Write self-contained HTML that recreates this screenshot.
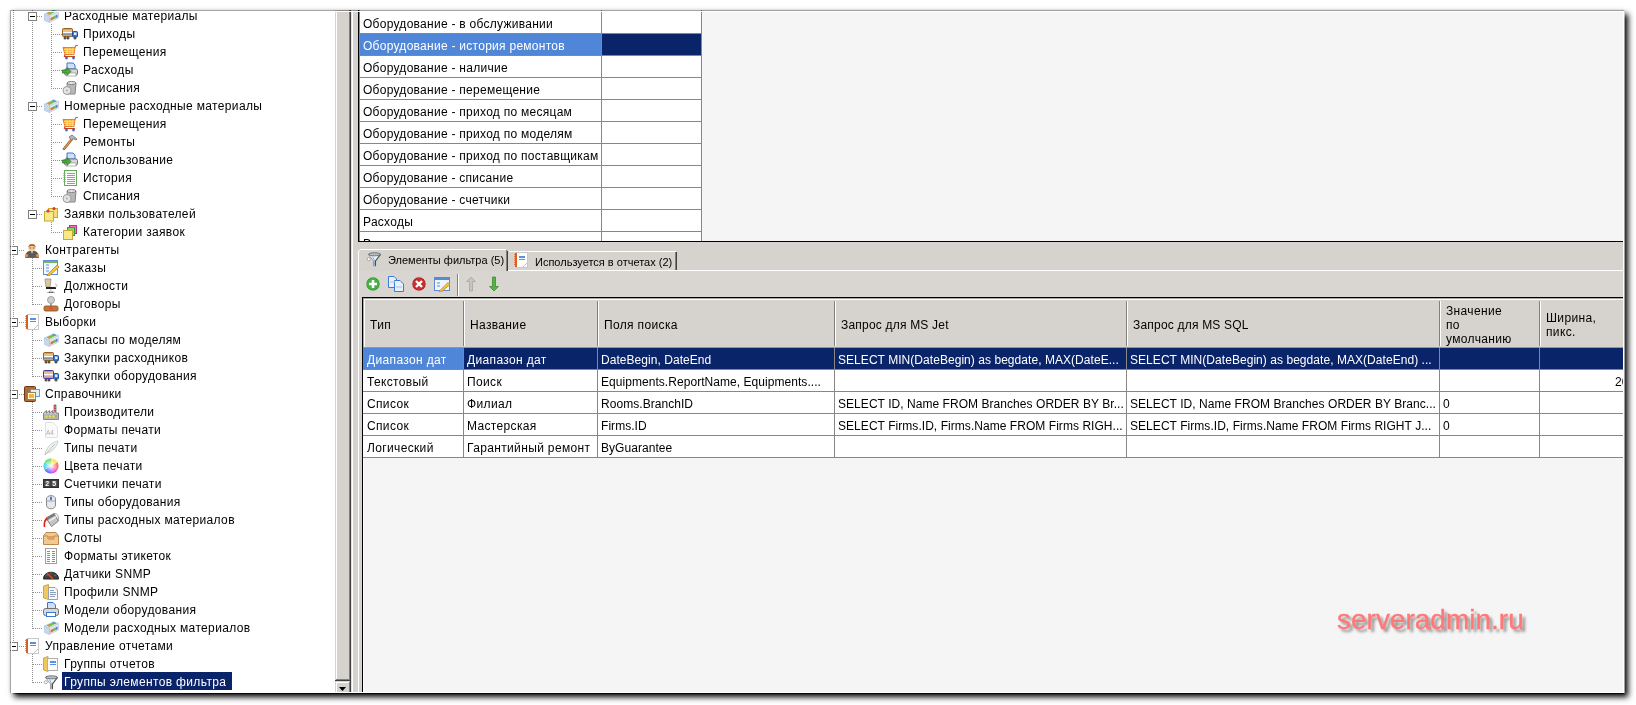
<!DOCTYPE html>
<html><head><meta charset="utf-8"><style>
html,body{margin:0;padding:0;}
body{width:1636px;height:705px;overflow:hidden;background:#fff;position:relative;font-family:"Liberation Sans", sans-serif;}
#shadow{position:absolute;left:10px;top:10px;width:1614px;height:683px;box-shadow:4px 4px 6px 0 rgba(0,0,0,1), 0 0 3px rgba(0,0,0,0.10);background:#fff;}
#clip{position:absolute;left:10px;top:10px;width:1613px;height:682px;overflow:hidden;}
#inner{position:absolute;left:-10px;top:-10px;width:1636px;height:705px;will-change:transform;}
.ov{position:absolute;}
#inner div{position:absolute;}
.t{line-height:16px;white-space:nowrap;}
#wm{position:absolute;left:1337px;top:600px;font:28px/40px "Liberation Sans", sans-serif;color:#ff7878;-webkit-text-stroke:0.4px #ff7878;text-shadow:3px 3px 3px rgba(0,0,0,0.45);white-space:nowrap;}
</style></head><body>
<div id="shadow"></div>
<div id="clip"><div id="inner">
<div style="left:0px;top:0px;width:335px;height:705px;background:#fff;"></div>
<div style="left:13px;top:10px;width:1px;height:637px;background:repeating-linear-gradient(to bottom,#909090 0,#909090 1px,transparent 1px,transparent 2px)"></div>
<div style="left:32px;top:10px;width:1px;height:205px;background:repeating-linear-gradient(to bottom,#909090 0,#909090 1px,transparent 1px,transparent 2px)"></div>
<div style="left:32px;top:258px;width:1px;height:47px;background:repeating-linear-gradient(to bottom,#909090 0,#909090 1px,transparent 1px,transparent 2px)"></div>
<div style="left:32px;top:330px;width:1px;height:47px;background:repeating-linear-gradient(to bottom,#909090 0,#909090 1px,transparent 1px,transparent 2px)"></div>
<div style="left:32px;top:402px;width:1px;height:227px;background:repeating-linear-gradient(to bottom,#909090 0,#909090 1px,transparent 1px,transparent 2px)"></div>
<div style="left:32px;top:654px;width:1px;height:29px;background:repeating-linear-gradient(to bottom,#909090 0,#909090 1px,transparent 1px,transparent 2px)"></div>
<div style="left:51px;top:24px;width:1px;height:65px;background:repeating-linear-gradient(to bottom,#909090 0,#909090 1px,transparent 1px,transparent 2px)"></div>
<div style="left:51px;top:114px;width:1px;height:83px;background:repeating-linear-gradient(to bottom,#909090 0,#909090 1px,transparent 1px,transparent 2px)"></div>
<div style="left:51px;top:222px;width:1px;height:11px;background:repeating-linear-gradient(to bottom,#909090 0,#909090 1px,transparent 1px,transparent 2px)"></div>
<div style="left:33px;top:16px;width:10px;height:1px;background:repeating-linear-gradient(to right,#909090 0,#909090 1px,transparent 1px,transparent 2px)"></div>
<div style="left:28px;top:12px;width:7px;height:7px;border:1px solid #808080;background:#fff"></div>
<div style="left:30px;top:16px;width:5px;height:1px;background:#000;"></div>
<svg style="position:absolute;left:43px;top:8px" width="16" height="16" viewBox="0 0 16 16"><path d="M1.5 6 L10.5 1.5 L15.5 3.5 L6.5 8 Z" fill="#eef4fb" stroke="#b8cce0" stroke-width="0.7"/>
<path d="M3.5 5.5 L10.5 2 L13.5 3.3 L6.5 6.8 Z" fill="#70c050"/>
<path d="M3.5 5.5 L6 4.2 L9 5.5 L6.5 6.8 Z" fill="#f08a30"/>
<path d="M9 2.8 L10.5 2 L13.5 3.3 L12 4.1 Z" fill="#4a90e2"/>
<path d="M6.5 8 L15.5 3.5 L15.5 10 L6.5 14.5 Z" fill="#dde8f4" stroke="#b8cce0" stroke-width="0.7"/>
<path d="M7.5 10 L10 8.8 V11.5 L7.5 12.7 Z" fill="#f07030"/><path d="M10 8.8 L12.5 7.5 V10.2 L10 11.5 Z" fill="#60c050"/><path d="M12.5 7.5 L14.5 6.5 V9.2 L12.5 10.2 Z" fill="#6a70e0"/>
<path d="M1.5 6 L6.5 8 L6.5 14.5 L1.5 12.5 Z" fill="#c8d8ec" stroke="#b0c4dc" stroke-width="0.7"/></svg>
<div class="t" style="left:64px;top:8px;color:#000;font-size:12px;letter-spacing:0.35px;">Расходные материалы</div>
<div style="left:53px;top:34px;width:9px;height:1px;background:repeating-linear-gradient(to right,#909090 0,#909090 1px,transparent 1px,transparent 2px)"></div>
<svg style="position:absolute;left:62px;top:26px" width="16" height="16" viewBox="0 0 16 16"><rect x="0.5" y="2.5" width="10" height="8" rx="1" fill="#d8a268" stroke="#9a6020"/>
<rect x="1" y="4.5" width="9" height="1" fill="#f4e0b0"/><rect x="1" y="6" width="9" height="1.5" fill="#fff"/><rect x="1" y="7.5" width="9" height="1" fill="#4a80d0"/>
<rect x="10.5" y="5.5" width="5" height="5.5" rx="1" fill="#3f7fd8" stroke="#1f4f98"/><rect x="12" y="6.5" width="2.5" height="2.5" fill="#e0ecff"/>
<circle cx="3" cy="12" r="1.5" fill="#505050"/><circle cx="6" cy="12" r="1.5" fill="#505050"/><circle cx="13" cy="12" r="1.5" fill="#505050"/></svg>
<div class="t" style="left:83px;top:26px;color:#000;font-size:12px;letter-spacing:0.35px;">Приходы</div>
<div style="left:53px;top:52px;width:9px;height:1px;background:repeating-linear-gradient(to right,#909090 0,#909090 1px,transparent 1px,transparent 2px)"></div>
<svg style="position:absolute;left:62px;top:44px" width="16" height="16" viewBox="0 0 16 16"><path d="M1 3.5 H13 L12 10.5 H3 Z" fill="#f9b43a" stroke="#e06a10" stroke-width="0.9"/>
<path d="M2 5.5 H12.7 M2.4 7.5 H12.4 M2.8 9.5 H12.1 M5 3.5 L5.5 10.5 M8 3.5 V10.5 M11 3.5 L10.5 10.5" stroke="#fde2a0" stroke-width="0.7"/>
<path d="M13 3.5 L14 1.5 H16" stroke="#e06a10" stroke-width="1.2" fill="none"/>
<path d="M3 10.5 L2.5 12.5 H13" stroke="#d84010" stroke-width="1.2" fill="none"/>
<circle cx="4.5" cy="14" r="1.4" fill="#3a6ad0"/><circle cx="11.5" cy="14" r="1.4" fill="#3a6ad0"/></svg>
<div class="t" style="left:83px;top:44px;color:#000;font-size:12px;letter-spacing:0.35px;">Перемещения</div>
<div style="left:53px;top:70px;width:9px;height:1px;background:repeating-linear-gradient(to right,#909090 0,#909090 1px,transparent 1px,transparent 2px)"></div>
<svg style="position:absolute;left:62px;top:62px" width="16" height="16" viewBox="0 0 16 16"><path d="M5 1 H11 L13 3 V7 H5 Z" fill="#cfe0f8" stroke="#3a78d0"/>
<rect x="2.5" y="7" width="13" height="6" rx="1.5" fill="#d8d8d8" stroke="#707070"/>
<rect x="4" y="11" width="10" height="3" fill="#fff" stroke="#888" stroke-width="0.6"/>
<path d="M0.5 8 H5 V5.5 L9 9.5 L5 13.5 V11 H0.5 Z" fill="#4caa3c" stroke="#2a7a20" stroke-width="0.8"/></svg>
<div class="t" style="left:83px;top:62px;color:#000;font-size:12px;letter-spacing:0.35px;">Расходы</div>
<div style="left:53px;top:88px;width:9px;height:1px;background:repeating-linear-gradient(to right,#909090 0,#909090 1px,transparent 1px,transparent 2px)"></div>
<svg style="position:absolute;left:62px;top:80px" width="16" height="16" viewBox="0 0 16 16"><path d="M5 3 H14 L13 14 H6 Z" fill="#c8c8c8" stroke="#808080"/>
<ellipse cx="9.5" cy="3" rx="4.5" ry="1.5" fill="#e8e8e8" stroke="#808080"/>
<path d="M8 5 V13 M10 5 V13 M12 5 V13" stroke="#999" stroke-width="0.7"/>
<circle cx="5" cy="10.5" r="4" fill="#e4e4e4" stroke="#9a9a9a"/><circle cx="5" cy="10.5" r="1" fill="#aaa"/></svg>
<div class="t" style="left:83px;top:80px;color:#000;font-size:12px;letter-spacing:0.35px;">Списания</div>
<div style="left:33px;top:106px;width:10px;height:1px;background:repeating-linear-gradient(to right,#909090 0,#909090 1px,transparent 1px,transparent 2px)"></div>
<div style="left:28px;top:102px;width:7px;height:7px;border:1px solid #808080;background:#fff"></div>
<div style="left:30px;top:106px;width:5px;height:1px;background:#000;"></div>
<svg style="position:absolute;left:43px;top:98px" width="16" height="16" viewBox="0 0 16 16"><path d="M1.5 6 L10.5 1.5 L15.5 3.5 L6.5 8 Z" fill="#eef4fb" stroke="#b8cce0" stroke-width="0.7"/>
<path d="M3.5 5.5 L10.5 2 L13.5 3.3 L6.5 6.8 Z" fill="#70c050"/>
<path d="M3.5 5.5 L6 4.2 L9 5.5 L6.5 6.8 Z" fill="#f08a30"/>
<path d="M9 2.8 L10.5 2 L13.5 3.3 L12 4.1 Z" fill="#4a90e2"/>
<path d="M6.5 8 L15.5 3.5 L15.5 10 L6.5 14.5 Z" fill="#dde8f4" stroke="#b8cce0" stroke-width="0.7"/>
<path d="M7.5 10 L10 8.8 V11.5 L7.5 12.7 Z" fill="#f07030"/><path d="M10 8.8 L12.5 7.5 V10.2 L10 11.5 Z" fill="#60c050"/><path d="M12.5 7.5 L14.5 6.5 V9.2 L12.5 10.2 Z" fill="#6a70e0"/>
<path d="M1.5 6 L6.5 8 L6.5 14.5 L1.5 12.5 Z" fill="#c8d8ec" stroke="#b0c4dc" stroke-width="0.7"/></svg>
<div class="t" style="left:64px;top:98px;color:#000;font-size:12px;letter-spacing:0.35px;">Номерные расходные материалы</div>
<div style="left:53px;top:124px;width:9px;height:1px;background:repeating-linear-gradient(to right,#909090 0,#909090 1px,transparent 1px,transparent 2px)"></div>
<svg style="position:absolute;left:62px;top:116px" width="16" height="16" viewBox="0 0 16 16"><path d="M1 3.5 H13 L12 10.5 H3 Z" fill="#f9b43a" stroke="#e06a10" stroke-width="0.9"/>
<path d="M2 5.5 H12.7 M2.4 7.5 H12.4 M2.8 9.5 H12.1 M5 3.5 L5.5 10.5 M8 3.5 V10.5 M11 3.5 L10.5 10.5" stroke="#fde2a0" stroke-width="0.7"/>
<path d="M13 3.5 L14 1.5 H16" stroke="#e06a10" stroke-width="1.2" fill="none"/>
<path d="M3 10.5 L2.5 12.5 H13" stroke="#d84010" stroke-width="1.2" fill="none"/>
<circle cx="4.5" cy="14" r="1.4" fill="#3a6ad0"/><circle cx="11.5" cy="14" r="1.4" fill="#3a6ad0"/></svg>
<div class="t" style="left:83px;top:116px;color:#000;font-size:12px;letter-spacing:0.35px;">Перемещения</div>
<div style="left:53px;top:142px;width:9px;height:1px;background:repeating-linear-gradient(to right,#909090 0,#909090 1px,transparent 1px,transparent 2px)"></div>
<svg style="position:absolute;left:62px;top:134px" width="16" height="16" viewBox="0 0 16 16"><path d="M2 15 L10 5" stroke="#a0602a" stroke-width="2.6" stroke-linecap="round"/>
<path d="M2 15 L10 5" stroke="#e8b070" stroke-width="1" stroke-linecap="round"/>
<path d="M7 3 L10 1 L15 5 L14 6 L11 4.5 L9.5 6.5 Z" fill="#b8b8b8" stroke="#707070" stroke-width="0.8"/></svg>
<div class="t" style="left:83px;top:134px;color:#000;font-size:12px;letter-spacing:0.35px;">Ремонты</div>
<div style="left:53px;top:160px;width:9px;height:1px;background:repeating-linear-gradient(to right,#909090 0,#909090 1px,transparent 1px,transparent 2px)"></div>
<svg style="position:absolute;left:62px;top:152px" width="16" height="16" viewBox="0 0 16 16"><path d="M5 1 H11 L13 3 V7 H5 Z" fill="#cfe0f8" stroke="#3a78d0"/>
<rect x="2.5" y="7" width="13" height="6" rx="1.5" fill="#d8d8d8" stroke="#707070"/>
<rect x="4" y="11" width="10" height="3" fill="#fff" stroke="#888" stroke-width="0.6"/>
<path d="M0.5 8 H5 V5.5 L9 9.5 L5 13.5 V11 H0.5 Z" fill="#4caa3c" stroke="#2a7a20" stroke-width="0.8"/></svg>
<div class="t" style="left:83px;top:152px;color:#000;font-size:12px;letter-spacing:0.35px;">Использование</div>
<div style="left:53px;top:178px;width:9px;height:1px;background:repeating-linear-gradient(to right,#909090 0,#909090 1px,transparent 1px,transparent 2px)"></div>
<svg style="position:absolute;left:62px;top:170px" width="16" height="16" viewBox="0 0 16 16"><rect x="2.5" y="0.5" width="12" height="15" fill="#fff" stroke="#6aa860"/>
<path d="M5 3.5 H13 M5 5.5 H13 M5 7.5 H13 M5 9.5 H13 M5 11.5 H13 M5 13.5 H13" stroke="#7aa0d8" stroke-width="1"/>
<path d="M1 3.5 H4 M1 5.5 H4 M1 7.5 H4 M1 9.5 H4 M1 11.5 H4" stroke="#999" stroke-width="0.6"/></svg>
<div class="t" style="left:83px;top:170px;color:#000;font-size:12px;letter-spacing:0.35px;">История</div>
<div style="left:53px;top:196px;width:9px;height:1px;background:repeating-linear-gradient(to right,#909090 0,#909090 1px,transparent 1px,transparent 2px)"></div>
<svg style="position:absolute;left:62px;top:188px" width="16" height="16" viewBox="0 0 16 16"><path d="M5 3 H14 L13 14 H6 Z" fill="#c8c8c8" stroke="#808080"/>
<ellipse cx="9.5" cy="3" rx="4.5" ry="1.5" fill="#e8e8e8" stroke="#808080"/>
<path d="M8 5 V13 M10 5 V13 M12 5 V13" stroke="#999" stroke-width="0.7"/>
<circle cx="5" cy="10.5" r="4" fill="#e4e4e4" stroke="#9a9a9a"/><circle cx="5" cy="10.5" r="1" fill="#aaa"/></svg>
<div class="t" style="left:83px;top:188px;color:#000;font-size:12px;letter-spacing:0.35px;">Списания</div>
<div style="left:33px;top:214px;width:10px;height:1px;background:repeating-linear-gradient(to right,#909090 0,#909090 1px,transparent 1px,transparent 2px)"></div>
<div style="left:28px;top:210px;width:7px;height:7px;border:1px solid #808080;background:#fff"></div>
<div style="left:30px;top:214px;width:5px;height:1px;background:#000;"></div>
<svg style="position:absolute;left:43px;top:206px" width="16" height="16" viewBox="0 0 16 16"><rect x="5.5" y="2.5" width="9" height="9" fill="#f4e07a" stroke="#c8a830"/>
<rect x="1.5" y="5.5" width="9" height="9.5" fill="#f7e88a" stroke="#c8a830"/>
<circle cx="11" cy="2.5" r="1.5" fill="#e03030"/><circle cx="5" cy="5" r="1.5" fill="#e03030"/></svg>
<div class="t" style="left:64px;top:206px;color:#000;font-size:12px;letter-spacing:0.35px;">Заявки пользователей</div>
<div style="left:53px;top:232px;width:9px;height:1px;background:repeating-linear-gradient(to right,#909090 0,#909090 1px,transparent 1px,transparent 2px)"></div>
<svg style="position:absolute;left:62px;top:224px" width="16" height="16" viewBox="0 0 16 16"><rect x="7.5" y="1.5" width="7" height="8" fill="#ff70c0" stroke="#c03090"/>
<rect x="5.5" y="3.5" width="7" height="8" fill="#70e060" stroke="#30a030"/>
<rect x="1.5" y="6.5" width="9" height="9" fill="#f7e88a" stroke="#c8a830"/></svg>
<div class="t" style="left:83px;top:224px;color:#000;font-size:12px;letter-spacing:0.35px;">Категории заявок</div>
<div style="left:15px;top:250px;width:9px;height:1px;background:repeating-linear-gradient(to right,#909090 0,#909090 1px,transparent 1px,transparent 2px)"></div>
<div style="left:9px;top:246px;width:7px;height:7px;border:1px solid #808080;background:#fff"></div>
<div style="left:11px;top:250px;width:5px;height:1px;background:#000;"></div>
<svg style="position:absolute;left:24px;top:242px" width="16" height="16" viewBox="0 0 16 16"><path d="M1.5 15.5 C1.5 10 4.5 9 8 9 C11.5 9 14.5 10 14.5 15.5 Z" fill="#5a5a5a" stroke="#3a3a3a" stroke-width="0.6"/>
<circle cx="2.5" cy="13.5" r="1.6" fill="#f09040"/><circle cx="13.5" cy="13.5" r="1.6" fill="#f09040"/>
<path d="M7 9 L8 12 L9 9 Z" fill="#e0e0e0"/>
<ellipse cx="8" cy="5.5" rx="3.6" ry="3.8" fill="#f6cca0"/>
<path d="M4.3 5.5 C4 1 12 1 11.7 5.5 C11 3.2 5 3.2 4.3 5.5 Z" fill="#9a4a1a"/>
<path d="M5.5 6 H7.3 M8.7 6 H10.5" stroke="#6a3a1a" stroke-width="0.8"/></svg>
<div class="t" style="left:45px;top:242px;color:#000;font-size:12px;letter-spacing:0.35px;">Контрагенты</div>
<div style="left:33px;top:268px;width:10px;height:1px;background:repeating-linear-gradient(to right,#909090 0,#909090 1px,transparent 1px,transparent 2px)"></div>
<svg style="position:absolute;left:43px;top:260px" width="16" height="16" viewBox="0 0 16 16"><rect x="0.5" y="0.5" width="14" height="14" fill="#f4f8ff" stroke="#5a90d8"/>
<rect x="1" y="1" width="13" height="2" fill="#7ab060"/>
<path d="M3 5 H6 M3 8 H6 M3 11 H6" stroke="#5a90d8" stroke-width="1.2"/>
<path d="M4 15 L14 5 L16 7 L6 16 Z" fill="#f7c830" stroke="#c08020" stroke-width="0.8"/>
<path d="M4 15 L5 16" stroke="#e06020" stroke-width="1.5"/></svg>
<div class="t" style="left:64px;top:260px;color:#000;font-size:12px;letter-spacing:0.35px;">Заказы</div>
<div style="left:33px;top:286px;width:10px;height:1px;background:repeating-linear-gradient(to right,#909090 0,#909090 1px,transparent 1px,transparent 2px)"></div>
<svg style="position:absolute;left:43px;top:278px" width="16" height="16" viewBox="0 0 16 16"><path d="M2 1 H8 L7 9 H3 Z" fill="#d8c8a0" stroke="#a09070" stroke-width="0.8"/>
<rect x="3" y="9" width="10" height="2" fill="#202020"/>
<path d="M12 6 C15 6 15 9 12 9" stroke="#bbb" fill="none"/>
<path d="M8 11 V13 M4 15 L8 13 L12 15 M8 13 V15" stroke="#c8c8c8" stroke-width="1.2"/></svg>
<div class="t" style="left:64px;top:278px;color:#000;font-size:12px;letter-spacing:0.35px;">Должности</div>
<div style="left:33px;top:304px;width:10px;height:1px;background:repeating-linear-gradient(to right,#909090 0,#909090 1px,transparent 1px,transparent 2px)"></div>
<svg style="position:absolute;left:43px;top:296px" width="16" height="16" viewBox="0 0 16 16"><circle cx="8" cy="4" r="3.5" fill="#d0d0d0" stroke="#909090" stroke-width="0.8"/>
<rect x="7" y="7" width="2" height="4" fill="#a0a0a0"/>
<rect x="1" y="10" width="14" height="5" rx="1.5" fill="#c07838" stroke="#8a4a18" stroke-width="0.8"/>
<rect x="6" y="12" width="4" height="1" fill="#e04040"/></svg>
<div class="t" style="left:64px;top:296px;color:#000;font-size:12px;letter-spacing:0.35px;">Договоры</div>
<div style="left:15px;top:322px;width:9px;height:1px;background:repeating-linear-gradient(to right,#909090 0,#909090 1px,transparent 1px,transparent 2px)"></div>
<div style="left:9px;top:318px;width:7px;height:7px;border:1px solid #808080;background:#fff"></div>
<div style="left:11px;top:322px;width:5px;height:1px;background:#000;"></div>
<svg style="position:absolute;left:24px;top:314px" width="16" height="16" viewBox="0 0 16 16"><rect x="3.5" y="0.5" width="11" height="15" fill="#fff" stroke="#c8c8c8"/>
<path d="M3 1 V15" stroke="#d86020" stroke-width="2"/>
<path d="M1 2.5 H3.5 M1 4.5 H3.5 M1 6.5 H3.5 M1 8.5 H3.5 M1 10.5 H3.5 M1 12.5 H3.5" stroke="#d86020" stroke-width="0.7"/>
<rect x="6" y="4" width="6" height="2" fill="#5a90e0"/><rect x="6" y="7" width="6" height="1" fill="#5a90e0"/>
<path d="M10 15 L14 11" stroke="#c0c0c0"/></svg>
<div class="t" style="left:45px;top:314px;color:#000;font-size:12px;letter-spacing:0.35px;">Выборки</div>
<div style="left:33px;top:340px;width:10px;height:1px;background:repeating-linear-gradient(to right,#909090 0,#909090 1px,transparent 1px,transparent 2px)"></div>
<svg style="position:absolute;left:43px;top:332px" width="16" height="16" viewBox="0 0 16 16"><path d="M1.5 6 L10.5 1.5 L15.5 3.5 L6.5 8 Z" fill="#eef4fb" stroke="#b8cce0" stroke-width="0.7"/>
<path d="M3.5 5.5 L10.5 2 L13.5 3.3 L6.5 6.8 Z" fill="#70c050"/>
<path d="M3.5 5.5 L6 4.2 L9 5.5 L6.5 6.8 Z" fill="#f08a30"/>
<path d="M9 2.8 L10.5 2 L13.5 3.3 L12 4.1 Z" fill="#4a90e2"/>
<path d="M6.5 8 L15.5 3.5 L15.5 10 L6.5 14.5 Z" fill="#dde8f4" stroke="#b8cce0" stroke-width="0.7"/>
<path d="M7.5 10 L10 8.8 V11.5 L7.5 12.7 Z" fill="#f07030"/><path d="M10 8.8 L12.5 7.5 V10.2 L10 11.5 Z" fill="#60c050"/><path d="M12.5 7.5 L14.5 6.5 V9.2 L12.5 10.2 Z" fill="#6a70e0"/>
<path d="M1.5 6 L6.5 8 L6.5 14.5 L1.5 12.5 Z" fill="#c8d8ec" stroke="#b0c4dc" stroke-width="0.7"/></svg>
<div class="t" style="left:64px;top:332px;color:#000;font-size:12px;letter-spacing:0.35px;">Запасы по моделям</div>
<div style="left:33px;top:358px;width:10px;height:1px;background:repeating-linear-gradient(to right,#909090 0,#909090 1px,transparent 1px,transparent 2px)"></div>
<svg style="position:absolute;left:43px;top:350px" width="16" height="16" viewBox="0 0 16 16"><rect x="0.5" y="2.5" width="10" height="8" rx="1" fill="#d8a268" stroke="#9a6020"/>
<rect x="1" y="4.5" width="9" height="1" fill="#f4e0b0"/><rect x="1" y="6" width="9" height="1.5" fill="#fff"/><rect x="1" y="7.5" width="9" height="1" fill="#4a80d0"/>
<rect x="10.5" y="5.5" width="5" height="5.5" rx="1" fill="#3f7fd8" stroke="#1f4f98"/><rect x="12" y="6.5" width="2.5" height="2.5" fill="#e0ecff"/>
<circle cx="3" cy="12" r="1.5" fill="#505050"/><circle cx="6" cy="12" r="1.5" fill="#505050"/><circle cx="13" cy="12" r="1.5" fill="#505050"/></svg>
<div class="t" style="left:64px;top:350px;color:#000;font-size:12px;letter-spacing:0.35px;">Закупки расходников</div>
<div style="left:33px;top:376px;width:10px;height:1px;background:repeating-linear-gradient(to right,#909090 0,#909090 1px,transparent 1px,transparent 2px)"></div>
<svg style="position:absolute;left:43px;top:368px" width="16" height="16" viewBox="0 0 16 16"><rect x="0.5" y="2.5" width="10" height="8" rx="1" fill="#d8a268" stroke="#4838a0"/>
<rect x="1" y="4.5" width="9" height="1" fill="#f4e0b0"/><rect x="1" y="6" width="9" height="1.5" fill="#fff"/><rect x="1" y="7.5" width="9" height="1" fill="#c0b0ff"/>
<rect x="10.5" y="5.5" width="5" height="5.5" rx="1" fill="#3f7fd8" stroke="#1f4f98"/><rect x="12" y="6.5" width="2.5" height="2.5" fill="#e0ecff"/>
<circle cx="3" cy="12" r="1.5" fill="#505050"/><circle cx="6" cy="12" r="1.5" fill="#505050"/><circle cx="13" cy="12" r="1.5" fill="#505050"/></svg>
<div class="t" style="left:64px;top:368px;color:#000;font-size:12px;letter-spacing:0.35px;">Закупки оборудования</div>
<div style="left:15px;top:394px;width:9px;height:1px;background:repeating-linear-gradient(to right,#909090 0,#909090 1px,transparent 1px,transparent 2px)"></div>
<div style="left:9px;top:390px;width:7px;height:7px;border:1px solid #808080;background:#fff"></div>
<div style="left:11px;top:394px;width:5px;height:1px;background:#000;"></div>
<svg style="position:absolute;left:24px;top:386px" width="16" height="16" viewBox="0 0 16 16"><rect x="0.5" y="0.5" width="11" height="15" rx="1" fill="#b06a38" stroke="#6a3a18"/>
<rect x="6.5" y="3.5" width="9" height="7" fill="#dfeeff" stroke="#6a9ad8"/>
<rect x="3.5" y="6.5" width="8" height="7" fill="#fff8d0" stroke="#a08040"/>
<rect x="5" y="8" width="5" height="4" fill="#e8b840"/></svg>
<div class="t" style="left:45px;top:386px;color:#000;font-size:12px;letter-spacing:0.35px;">Справочники</div>
<div style="left:33px;top:412px;width:10px;height:1px;background:repeating-linear-gradient(to right,#909090 0,#909090 1px,transparent 1px,transparent 2px)"></div>
<svg style="position:absolute;left:43px;top:404px" width="16" height="16" viewBox="0 0 16 16"><path d="M0.5 15.5 V9 L3.5 6.5 V9 L6.5 6.5 V9 L9.5 6.5 V9 H11 V1 H13 V9 H15.5 V15.5 Z" fill="#c8c8c8" stroke="#707070" stroke-width="0.8"/>
<path d="M12 1 V8" stroke="#d02020" stroke-width="1.5" stroke-dasharray="1.5,1"/>
<rect x="1.5" y="10.5" width="13" height="4" fill="#a8a8a8"/>
<circle cx="3.5" cy="12.5" r="1.2" fill="#f0e040"/><circle cx="7" cy="12.5" r="1.2" fill="#f0e040"/><circle cx="10.5" cy="12.5" r="1.2" fill="#f0e040"/></svg>
<div class="t" style="left:64px;top:404px;color:#000;font-size:12px;letter-spacing:0.35px;">Производители</div>
<div style="left:33px;top:430px;width:10px;height:1px;background:repeating-linear-gradient(to right,#909090 0,#909090 1px,transparent 1px,transparent 2px)"></div>
<svg style="position:absolute;left:43px;top:422px" width="16" height="16" viewBox="0 0 16 16"><path d="M2.5 0.5 H10 L14.5 5 V15.5 H2.5 Z" fill="#fafafa" stroke="#e0e0e0"/>
<text x="3" y="13" font-family="Liberation Sans" font-size="6.5" fill="#b0b0b0">A4</text></svg>
<div class="t" style="left:64px;top:422px;color:#000;font-size:12px;letter-spacing:0.35px;">Форматы печати</div>
<div style="left:33px;top:448px;width:10px;height:1px;background:repeating-linear-gradient(to right,#909090 0,#909090 1px,transparent 1px,transparent 2px)"></div>
<svg style="position:absolute;left:43px;top:440px" width="16" height="16" viewBox="0 0 16 16"><path d="M2 15 C3 8 8 2 15 1 C14 7 9 12 4 13 Z" fill="#eef2ee" stroke="#c0c8c0" stroke-width="0.8"/>
<path d="M2 15 L12 4" stroke="#a8b8a8" stroke-width="0.8"/></svg>
<div class="t" style="left:64px;top:440px;color:#000;font-size:12px;letter-spacing:0.35px;">Типы печати</div>
<div style="left:33px;top:466px;width:10px;height:1px;background:repeating-linear-gradient(to right,#909090 0,#909090 1px,transparent 1px,transparent 2px)"></div>
<svg style="position:absolute;left:43px;top:458px" width="16" height="16" viewBox="0 0 16 16"><defs><radialGradient id="wg" cx="50%" cy="50%" r="50%"><stop offset="0" stop-color="#fff"/><stop offset="1" stop-color="#fff" stop-opacity="0"/></radialGradient></defs>
<path d="M8 8 L8 0.5 A7.5 7.5 0 0 1 14.5 4.25 Z" fill="#ffe040"/>
<path d="M8 8 L14.5 4.25 A7.5 7.5 0 0 1 14.5 11.75 Z" fill="#ff6060"/>
<path d="M8 8 L14.5 11.75 A7.5 7.5 0 0 1 8 15.5 Z" fill="#e040e0"/>
<path d="M8 8 L8 15.5 A7.5 7.5 0 0 1 1.5 11.75 Z" fill="#6060ff"/>
<path d="M8 8 L1.5 11.75 A7.5 7.5 0 0 1 1.5 4.25 Z" fill="#40d0f0"/>
<path d="M8 8 L1.5 4.25 A7.5 7.5 0 0 1 8 0.5 Z" fill="#60e060"/>
<circle cx="8" cy="8" r="7.5" fill="url(#wg)"/></svg>
<div class="t" style="left:64px;top:458px;color:#000;font-size:12px;letter-spacing:0.35px;">Цвета печати</div>
<div style="left:33px;top:484px;width:10px;height:1px;background:repeating-linear-gradient(to right,#909090 0,#909090 1px,transparent 1px,transparent 2px)"></div>
<svg style="position:absolute;left:43px;top:476px" width="16" height="16" viewBox="0 0 16 16"><rect x="0" y="3" width="16" height="9" fill="#303030"/>
<rect x="1.5" y="4.5" width="6" height="6" fill="#555"/><rect x="8.5" y="4.5" width="6" height="6" fill="#555"/>
<text x="2.3" y="10" font-family="Liberation Sans" font-size="7" font-weight="bold" fill="#fff">2</text>
<text x="9.3" y="10" font-family="Liberation Sans" font-size="7" font-weight="bold" fill="#fff">5</text></svg>
<div class="t" style="left:64px;top:476px;color:#000;font-size:12px;letter-spacing:0.35px;">Счетчики печати</div>
<div style="left:33px;top:502px;width:10px;height:1px;background:repeating-linear-gradient(to right,#909090 0,#909090 1px,transparent 1px,transparent 2px)"></div>
<svg style="position:absolute;left:43px;top:494px" width="16" height="16" viewBox="0 0 16 16"><path d="M3.5 5 C3.5 0.5 12.5 0.5 12.5 5 V11 C12.5 16 3.5 16 3.5 11 Z" fill="#e8e8e8" stroke="#8a8a8a"/>
<path d="M3.5 7 H12.5 M8 1 V7" stroke="#8a9ab8" stroke-width="0.8"/>
<rect x="7" y="3" width="2" height="3" rx="1" fill="#3a70d0"/></svg>
<div class="t" style="left:64px;top:494px;color:#000;font-size:12px;letter-spacing:0.35px;">Типы оборудования</div>
<div style="left:33px;top:520px;width:10px;height:1px;background:repeating-linear-gradient(to right,#909090 0,#909090 1px,transparent 1px,transparent 2px)"></div>
<svg style="position:absolute;left:43px;top:512px" width="16" height="16" viewBox="0 0 16 16"><path d="M3 6 L11 1.5 L15.5 9 L8.5 14.5 Z" fill="#c4c4c4" stroke="#6a6a6a" stroke-width="0.8"/>
<path d="M3 6 L11 1.5 L12 3.5 L4.5 8 Z" fill="#7a7a7a"/>
<path d="M6 9 L13 5" stroke="#eaeaea" stroke-width="1.5"/>
<path d="M11 1.5 C15 1 16 5 15.5 9" stroke="#8a8a8a" fill="none" stroke-width="0.8"/>
<path d="M4 6.5 C2 8 1 11 1.5 15" stroke="#e02010" stroke-width="1.6" fill="none"/></svg>
<div class="t" style="left:64px;top:512px;color:#000;font-size:12px;letter-spacing:0.35px;">Типы расходных материалов</div>
<div style="left:33px;top:538px;width:10px;height:1px;background:repeating-linear-gradient(to right,#909090 0,#909090 1px,transparent 1px,transparent 2px)"></div>
<svg style="position:absolute;left:43px;top:530px" width="16" height="16" viewBox="0 0 16 16"><path d="M0.5 6 L3 2.5 H13 L15.5 6 V14.5 H0.5 Z" fill="#f0c890" stroke="#c08850"/>
<path d="M0.5 6 H5 V9 H11 V6 H15.5" fill="none" stroke="#c08850"/>
<rect x="5" y="6" width="6" height="3" fill="#d8a060"/></svg>
<div class="t" style="left:64px;top:530px;color:#000;font-size:12px;letter-spacing:0.35px;">Слоты</div>
<div style="left:33px;top:556px;width:10px;height:1px;background:repeating-linear-gradient(to right,#909090 0,#909090 1px,transparent 1px,transparent 2px)"></div>
<svg style="position:absolute;left:43px;top:548px" width="16" height="16" viewBox="0 0 16 16"><rect x="2.5" y="0.5" width="11" height="15" fill="#fff" stroke="#a0a0a0"/>
<path d="M4 3.5 H7 M9 3.5 H12 M4 5.5 H7 M9 5.5 H12 M4 7.5 H7 M9 7.5 H12 M4 9.5 H7 M9 9.5 H12 M4 11.5 H7 M9 11.5 H12 M4 13.5 H7 M9 13.5 H12" stroke="#6a90c8" stroke-width="1"/></svg>
<div class="t" style="left:64px;top:548px;color:#000;font-size:12px;letter-spacing:0.35px;">Форматы этикеток</div>
<div style="left:33px;top:574px;width:10px;height:1px;background:repeating-linear-gradient(to right,#909090 0,#909090 1px,transparent 1px,transparent 2px)"></div>
<svg style="position:absolute;left:43px;top:566px" width="16" height="16" viewBox="0 0 16 16"><path d="M0.5 13 C0.5 4 15.5 4 15.5 13 Z" fill="#404040" stroke="#202020"/>
<path d="M4 7 L10 13" stroke="#e05020" stroke-width="1.3"/>
<circle cx="4" cy="9" r="0.6" fill="#aaa"/><circle cx="8" cy="7" r="0.6" fill="#aaa"/><circle cx="12" cy="9" r="0.6" fill="#aaa"/></svg>
<div class="t" style="left:64px;top:566px;color:#000;font-size:12px;letter-spacing:0.35px;">Датчики SNMP</div>
<div style="left:33px;top:592px;width:10px;height:1px;background:repeating-linear-gradient(to right,#909090 0,#909090 1px,transparent 1px,transparent 2px)"></div>
<svg style="position:absolute;left:43px;top:584px" width="16" height="16" viewBox="0 0 16 16"><path d="M0.5 2 L5.5 0.5 V15.5 L0.5 14 Z" fill="#f0c860" stroke="#c89830" stroke-width="0.8"/>
<path d="M5.5 3.5 H12 L14.5 6 V15.5 H5.5 Z" fill="#f8f8f8" stroke="#a0a0a0"/>
<path d="M7 6.5 H11 M7 8.5 H13 M7 10.5 H13 M7 12.5 H12" stroke="#8aa0c0" stroke-width="1"/></svg>
<div class="t" style="left:64px;top:584px;color:#000;font-size:12px;letter-spacing:0.35px;">Профили SNMP</div>
<div style="left:33px;top:610px;width:10px;height:1px;background:repeating-linear-gradient(to right,#909090 0,#909090 1px,transparent 1px,transparent 2px)"></div>
<svg style="position:absolute;left:43px;top:602px" width="16" height="16" viewBox="0 0 16 16"><path d="M4.5 0.5 H10 L12.5 3 V7 H4.5 Z" fill="#cfe0f8" stroke="#3a78d0"/>
<rect x="0.5" y="6.5" width="15" height="7" rx="2" fill="#d8d8d8" stroke="#707070"/>
<rect x="3.5" y="10.5" width="9" height="4" fill="#fff" stroke="#3a78d0"/></svg>
<div class="t" style="left:64px;top:602px;color:#000;font-size:12px;letter-spacing:0.35px;">Модели оборудования</div>
<div style="left:33px;top:628px;width:10px;height:1px;background:repeating-linear-gradient(to right,#909090 0,#909090 1px,transparent 1px,transparent 2px)"></div>
<svg style="position:absolute;left:43px;top:620px" width="16" height="16" viewBox="0 0 16 16"><path d="M1.5 6 L10.5 1.5 L15.5 3.5 L6.5 8 Z" fill="#eef4fb" stroke="#b8cce0" stroke-width="0.7"/>
<path d="M3.5 5.5 L10.5 2 L13.5 3.3 L6.5 6.8 Z" fill="#70c050"/>
<path d="M3.5 5.5 L6 4.2 L9 5.5 L6.5 6.8 Z" fill="#f08a30"/>
<path d="M9 2.8 L10.5 2 L13.5 3.3 L12 4.1 Z" fill="#4a90e2"/>
<path d="M6.5 8 L15.5 3.5 L15.5 10 L6.5 14.5 Z" fill="#dde8f4" stroke="#b8cce0" stroke-width="0.7"/>
<path d="M7.5 10 L10 8.8 V11.5 L7.5 12.7 Z" fill="#f07030"/><path d="M10 8.8 L12.5 7.5 V10.2 L10 11.5 Z" fill="#60c050"/><path d="M12.5 7.5 L14.5 6.5 V9.2 L12.5 10.2 Z" fill="#6a70e0"/>
<path d="M1.5 6 L6.5 8 L6.5 14.5 L1.5 12.5 Z" fill="#c8d8ec" stroke="#b0c4dc" stroke-width="0.7"/></svg>
<div class="t" style="left:64px;top:620px;color:#000;font-size:12px;letter-spacing:0.35px;">Модели расходных материалов</div>
<div style="left:15px;top:646px;width:9px;height:1px;background:repeating-linear-gradient(to right,#909090 0,#909090 1px,transparent 1px,transparent 2px)"></div>
<div style="left:9px;top:642px;width:7px;height:7px;border:1px solid #808080;background:#fff"></div>
<div style="left:11px;top:646px;width:5px;height:1px;background:#000;"></div>
<svg style="position:absolute;left:24px;top:638px" width="16" height="16" viewBox="0 0 16 16"><rect x="3.5" y="0.5" width="11" height="15" fill="#fff" stroke="#c8c8c8"/>
<path d="M3 1 V15" stroke="#d86020" stroke-width="2"/>
<path d="M1 2.5 H3.5 M1 4.5 H3.5 M1 6.5 H3.5 M1 8.5 H3.5 M1 10.5 H3.5 M1 12.5 H3.5" stroke="#d86020" stroke-width="0.7"/>
<rect x="6" y="4" width="6" height="2" fill="#5a90e0"/><rect x="6" y="7" width="6" height="1" fill="#5a90e0"/>
<path d="M10 15 L14 11" stroke="#c0c0c0"/></svg>
<div class="t" style="left:45px;top:638px;color:#000;font-size:12px;letter-spacing:0.35px;">Управление отчетами</div>
<div style="left:33px;top:664px;width:10px;height:1px;background:repeating-linear-gradient(to right,#909090 0,#909090 1px,transparent 1px,transparent 2px)"></div>
<svg style="position:absolute;left:43px;top:656px" width="16" height="16" viewBox="0 0 16 16"><path d="M0.5 2 L5 0.5 V15.5 L0.5 14 Z" fill="#f0c860" stroke="#c89830" stroke-width="0.8"/>
<rect x="4.5" y="2.5" width="10" height="12" fill="#fafafa" stroke="#b0b0b0"/>
<rect x="7" y="5" width="6" height="2" fill="#5a90e0"/><rect x="7" y="8" width="6" height="1" fill="#5a90e0"/></svg>
<div class="t" style="left:64px;top:656px;color:#000;font-size:12px;letter-spacing:0.35px;">Группы отчетов</div>
<div style="left:33px;top:682px;width:10px;height:1px;background:repeating-linear-gradient(to right,#909090 0,#909090 1px,transparent 1px,transparent 2px)"></div>
<svg style="position:absolute;left:43px;top:674px" width="16" height="16" viewBox="0 0 16 16"><path d="M2.5 3.5 L14.5 3.5 L9.5 10 V15 H7.5 V10 Z" fill="#eef2f6" stroke="#8a8a8a" stroke-width="0.8"/>
<path d="M14.5 3.5 L9.5 10 V15" stroke="#505050" stroke-width="1.1" fill="none"/>
<ellipse cx="8.5" cy="3.3" rx="6" ry="1.5" fill="#b8c0c8" stroke="#5a5a5a" stroke-width="0.8"/>
<path d="M6.5 5.5 L8.5 9.5 V14" stroke="#7aa8d8" stroke-width="0.9" fill="none"/>
<circle cx="2.8" cy="8.2" r="1.6" fill="#fff" stroke="#a08888" stroke-width="0.7"/></svg>
<div style="left:62px;top:672px;width:170px;height:18px;background:#0a246a;"></div>
<div class="t" style="left:64px;top:674px;color:#fff;font-size:12px;letter-spacing:0.35px;">Группы элементов фильтра</div>
<div style="left:335px;top:-5px;width:16px;height:686px;background:#404040;"></div>
<div style="left:335px;top:-5px;width:15px;height:685px;background:#d6d3ce;"></div>
<div style="left:336px;top:-4px;width:14px;height:684px;background:#808080;"></div>
<div style="left:336px;top:-4px;width:13px;height:683px;background:#fff;"></div>
<div style="left:337px;top:-3px;width:12px;height:682px;background:#d6d3ce;"></div>
<div style="left:335px;top:681px;width:16px;height:16px;background:#404040;"></div>
<div style="left:335px;top:681px;width:15px;height:15px;background:#d6d3ce;"></div>
<div style="left:336px;top:682px;width:14px;height:14px;background:#808080;"></div>
<div style="left:336px;top:682px;width:13px;height:13px;background:#fff;"></div>
<div style="left:337px;top:683px;width:12px;height:12px;background:#d6d3ce;"></div>
<svg style="position:absolute;left:339px;top:687px" width="7" height="4" viewBox="0 0 7 4"><path d="M0 0 H7 L3.5 4 Z" fill="#000"/></svg>
<div style="left:351px;top:0px;width:1272px;height:705px;background:#d6d3ce;"></div>
<div style="left:351px;top:0px;width:1px;height:705px;background:#e4e1dc;"></div>
<div style="left:352px;top:0px;width:1px;height:705px;background:#fff;"></div>
<div style="left:0;top:0;width:1636px;height:242px;overflow:hidden">
<div style="left:358px;top:0px;width:1265px;height:242px;background:#000;"></div>
<div style="left:359px;top:0px;width:1264px;height:241px;background:#f5f5f5;"></div>
<div style="left:359px;top:0px;width:343px;height:241px;background:#fff;"></div>
<div style="left:359px;top:0px;width:1px;height:241px;background:#8a8782;"></div>
<div style="left:601px;top:0px;width:1px;height:241px;background:#8a8782;"></div>
<div style="left:701px;top:0px;width:1px;height:241px;background:#8a8782;"></div>
<div style="left:359px;top:33px;width:343px;height:1px;background:#8a8782;"></div>
<div class="t" style="left:363px;top:16px;color:#000;font-size:12px;letter-spacing:0.27px;">Оборудование - в обслуживании</div>
<div style="left:359px;top:55px;width:343px;height:1px;background:#8a8782;"></div>
<div style="left:360px;top:34px;width:241px;height:21px;background:#4f86d8;"></div>
<div style="left:602px;top:34px;width:99px;height:21px;background:#0a246a;"></div>
<div class="t" style="left:363px;top:38px;color:#fff;font-size:12px;letter-spacing:0.27px;">Оборудование - история ремонтов</div>
<div style="left:359px;top:77px;width:343px;height:1px;background:#8a8782;"></div>
<div class="t" style="left:363px;top:60px;color:#000;font-size:12px;letter-spacing:0.27px;">Оборудование - наличие</div>
<div style="left:359px;top:99px;width:343px;height:1px;background:#8a8782;"></div>
<div class="t" style="left:363px;top:82px;color:#000;font-size:12px;letter-spacing:0.27px;">Оборудование - перемещение</div>
<div style="left:359px;top:121px;width:343px;height:1px;background:#8a8782;"></div>
<div class="t" style="left:363px;top:104px;color:#000;font-size:12px;letter-spacing:0.27px;">Оборудование - приход по месяцам</div>
<div style="left:359px;top:143px;width:343px;height:1px;background:#8a8782;"></div>
<div class="t" style="left:363px;top:126px;color:#000;font-size:12px;letter-spacing:0.27px;">Оборудование - приход по моделям</div>
<div style="left:359px;top:165px;width:343px;height:1px;background:#8a8782;"></div>
<div class="t" style="left:363px;top:148px;color:#000;font-size:12px;letter-spacing:0.27px;">Оборудование - приход по поставщикам</div>
<div style="left:359px;top:187px;width:343px;height:1px;background:#8a8782;"></div>
<div class="t" style="left:363px;top:170px;color:#000;font-size:12px;letter-spacing:0.27px;">Оборудование - списание</div>
<div style="left:359px;top:209px;width:343px;height:1px;background:#8a8782;"></div>
<div class="t" style="left:363px;top:192px;color:#000;font-size:12px;letter-spacing:0.27px;">Оборудование - счетчики</div>
<div style="left:359px;top:231px;width:343px;height:1px;background:#8a8782;"></div>
<div class="t" style="left:363px;top:214px;color:#000;font-size:12px;letter-spacing:0.27px;">Расходы</div>
<div class="t" style="left:363px;top:236px;color:#000;font-size:12px;letter-spacing:0.27px;">Рыночная стоимость</div>
<div style="left:358px;top:241px;width:1265px;height:1px;background:#000;"></div>
</div>
<div style="left:509px;top:251px;width:168px;height:19px;background:#d6d3ce;"></div>
<div style="left:509px;top:251px;width:167px;height:1px;background:#fff;"></div>
<div style="left:675px;top:252px;width:1px;height:18px;background:#808080;"></div>
<div style="left:676px;top:252px;width:1px;height:18px;background:#404040;"></div>
<svg style="position:absolute;left:513px;top:252px" width="16" height="16" viewBox="0 0 16 16"><rect x="3.5" y="0.5" width="11" height="15" fill="#fff" stroke="#c8c8c8"/>
<path d="M3 1 V15" stroke="#d86020" stroke-width="2"/>
<path d="M1 2.5 H3.5 M1 4.5 H3.5 M1 6.5 H3.5 M1 8.5 H3.5 M1 10.5 H3.5 M1 12.5 H3.5" stroke="#d86020" stroke-width="0.7"/>
<rect x="6" y="4" width="6" height="2" fill="#5a90e0"/><rect x="6" y="7" width="6" height="1" fill="#5a90e0"/>
<path d="M10 15 L14 11" stroke="#c0c0c0"/></svg>
<div class="t" style="left:535px;top:254px;color:#000;font-size:11px;letter-spacing:0px;">Используется в отчетах (2)</div>
<div style="left:358px;top:270px;width:1265px;height:1px;background:#fff;"></div>
<div style="left:358px;top:270px;width:1px;height:422px;background:#fff;"></div>
<div style="left:358px;top:249px;width:150px;height:22px;background:#d6d3ce;"></div>
<div style="left:360px;top:249px;width:146px;height:1px;background:#fff;"></div>
<div style="left:358px;top:251px;width:1px;height:20px;background:#fff;"></div>
<div style="left:359px;top:250px;width:1px;height:1px;background:#fff;"></div>
<div style="left:506px;top:250px;width:1px;height:21px;background:#808080;"></div>
<div style="left:507px;top:251px;width:1px;height:20px;background:#404040;"></div>
<svg style="position:absolute;left:366px;top:251px" width="16" height="16" viewBox="0 0 16 16"><path d="M2.5 3.5 L14.5 3.5 L9.5 10 V15 H7.5 V10 Z" fill="#eef2f6" stroke="#8a8a8a" stroke-width="0.8"/>
<path d="M14.5 3.5 L9.5 10 V15" stroke="#505050" stroke-width="1.1" fill="none"/>
<ellipse cx="8.5" cy="3.3" rx="6" ry="1.5" fill="#b8c0c8" stroke="#5a5a5a" stroke-width="0.8"/>
<path d="M6.5 5.5 L8.5 9.5 V14" stroke="#7aa8d8" stroke-width="0.9" fill="none"/>
<circle cx="2.8" cy="8.2" r="1.6" fill="#fff" stroke="#a08888" stroke-width="0.7"/></svg>
<div class="t" style="left:388px;top:252px;color:#000;font-size:11px;letter-spacing:0px;">Элементы фильтра (5)</div>
<div style="left:359px;top:271px;width:1264px;height:26px;background:#d9d5d1;"></div>
<svg style="position:absolute;left:365px;top:276px" width="16" height="16" viewBox="0 0 16 16"><circle cx="8" cy="8" r="7.2" fill="#3a9a30" stroke="#d8d8d8" stroke-width="1"/><circle cx="8" cy="8" r="6" fill="#48b040"/>
<path d="M8 4 V12 M4 8 H12" stroke="#fff" stroke-width="2.6"/></svg>
<svg style="position:absolute;left:388px;top:276px" width="16" height="16" viewBox="0 0 16 16"><path d="M0.5 0.5 H6 L8.5 3 V11.5 H0.5 Z" fill="#e8f0fc" stroke="#3a7ad8"/>
<path d="M6.5 4.5 H12 L15.5 8 V15.5 H6.5 Z" fill="#e8f0fc" stroke="#3a7ad8"/>
<path d="M2 6 H7 M8 11 H14" stroke="#a8c0e8"/></svg>
<svg style="position:absolute;left:411px;top:276px" width="16" height="16" viewBox="0 0 16 16"><circle cx="8" cy="8" r="7.2" fill="#b02020" stroke="#d8d8d8" stroke-width="1"/><circle cx="8" cy="8" r="6" fill="#c83030"/>
<path d="M5 5 L11 11 M11 5 L5 11" stroke="#fff" stroke-width="2.4"/></svg>
<svg style="position:absolute;left:434px;top:276px" width="16" height="16" viewBox="0 0 16 16"><rect x="0.5" y="1.5" width="15" height="13" fill="#f0f4fc" stroke="#5a8ad0"/>
<rect x="1" y="2" width="14" height="2" fill="#5a8ad0"/>
<path d="M3 7 H6 M3 10 H6" stroke="#5a8ad0" stroke-width="1.2"/>
<path d="M5 15.5 L14 6.5 L16 8.5 L7 16 Z" fill="#f7c830" stroke="#c08020" stroke-width="0.8"/></svg>
<svg style="position:absolute;left:466px;top:276px" width="10" height="16" viewBox="3 0 10 16"><path d="M8 1 L12.5 5.5 H9.5 V15 H6.5 V5.5 H3.5 Z" fill="#c4c4c4" stroke="#a0a0a0" stroke-width="0.7"/></svg>
<svg style="position:absolute;left:489px;top:276px" width="10" height="16" viewBox="3 0 10 16"><path d="M8 15 L12.5 10.5 H9.5 V1 H6.5 V10.5 H3.5 Z" fill="#58b048" stroke="#2f8a22" stroke-width="0.7"/></svg>
<div style="left:457px;top:274px;width:1px;height:22px;background:#808080;"></div>
<div style="left:458px;top:274px;width:1px;height:22px;background:#fff;"></div>
<div style="left:362px;top:297px;width:1261px;height:395px;background:#000;"></div>
<div style="left:363px;top:298px;width:1260px;height:394px;background:#f5f5f5;"></div>
<div style="left:363px;top:458px;width:1px;height:240px;background:#fff;"></div>
<div style="left:363px;top:298px;width:1260px;height:50px;background:#d6d3ce;"></div>
<div style="left:363px;top:298px;width:1260px;height:1px;background:#a8a6a2;"></div>
<div style="left:363px;top:298px;width:1px;height:49px;background:#a8a6a2;"></div>
<div style="left:364px;top:299px;width:1259px;height:1px;background:#fff;"></div>
<div style="left:364px;top:299px;width:1px;height:48px;background:#fff;"></div>
<div style="left:363px;top:347px;width:1260px;height:1px;background:#9a968e;"></div>
<div style="left:463px;top:301px;width:1px;height:45px;background:#808080;"></div>
<div style="left:464px;top:301px;width:1px;height:45px;background:#fff;"></div>
<div style="left:597px;top:301px;width:1px;height:45px;background:#808080;"></div>
<div style="left:598px;top:301px;width:1px;height:45px;background:#fff;"></div>
<div style="left:834px;top:301px;width:1px;height:45px;background:#808080;"></div>
<div style="left:835px;top:301px;width:1px;height:45px;background:#fff;"></div>
<div style="left:1126px;top:301px;width:1px;height:45px;background:#808080;"></div>
<div style="left:1127px;top:301px;width:1px;height:45px;background:#fff;"></div>
<div style="left:1439px;top:301px;width:1px;height:45px;background:#808080;"></div>
<div style="left:1440px;top:301px;width:1px;height:45px;background:#fff;"></div>
<div style="left:1539px;top:301px;width:1px;height:45px;background:#808080;"></div>
<div style="left:1540px;top:301px;width:1px;height:45px;background:#fff;"></div>
<div class="t" style="left:370px;top:317px;color:#000;font-size:12px;letter-spacing:0.35px;">Тип</div>
<div class="t" style="left:470px;top:317px;color:#000;font-size:12px;letter-spacing:0.35px;">Название</div>
<div class="t" style="left:604px;top:317px;color:#000;font-size:12px;letter-spacing:0.35px;">Поля поиска</div>
<div class="t" style="left:841px;top:317px;color:#000;font-size:12px;letter-spacing:0.2px;">Запрос для MS Jet</div>
<div class="t" style="left:1133px;top:317px;color:#000;font-size:12px;letter-spacing:0.2px;">Запрос для MS SQL</div>
<div class="t" style="left:1446px;top:303px;color:#000;font-size:12px;letter-spacing:0.35px;">Значение</div>
<div class="t" style="left:1446px;top:317px;color:#000;font-size:12px;letter-spacing:0.35px;">по</div>
<div class="t" style="left:1446px;top:331px;color:#000;font-size:12px;letter-spacing:0.35px;">умолчанию</div>
<div class="t" style="left:1546px;top:310px;color:#000;font-size:12px;letter-spacing:0.35px;">Ширина,</div>
<div class="t" style="left:1546px;top:324px;color:#000;font-size:12px;letter-spacing:0.35px;">пикс.</div>
<div style="left:363px;top:348px;width:1260px;height:21px;background:#fff;"></div>
<div style="left:363px;top:369px;width:1260px;height:1px;background:#8a8782;"></div>
<div style="left:463px;top:348px;width:1px;height:22px;background:#8a8782;"></div>
<div style="left:597px;top:348px;width:1px;height:22px;background:#8a8782;"></div>
<div style="left:834px;top:348px;width:1px;height:22px;background:#8a8782;"></div>
<div style="left:1126px;top:348px;width:1px;height:22px;background:#8a8782;"></div>
<div style="left:1439px;top:348px;width:1px;height:22px;background:#8a8782;"></div>
<div style="left:1539px;top:348px;width:1px;height:22px;background:#8a8782;"></div>
<div style="left:363px;top:348px;width:100px;height:21px;background:#4f86d8;"></div>
<div style="left:464px;top:348px;width:1159px;height:21px;background:#0a246a;"></div>
<div style="left:463px;top:348px;width:1px;height:22px;background:#8a8782;"></div>
<div style="left:597px;top:348px;width:1px;height:22px;background:#8a8782;"></div>
<div style="left:834px;top:348px;width:1px;height:22px;background:#8a8782;"></div>
<div style="left:1126px;top:348px;width:1px;height:22px;background:#8a8782;"></div>
<div style="left:1439px;top:348px;width:1px;height:22px;background:#8a8782;"></div>
<div style="left:1539px;top:348px;width:1px;height:22px;background:#8a8782;"></div>
<div class="t" style="left:367px;top:352px;color:#fff;font-size:12px;letter-spacing:0.35px;">Диапазон дат</div>
<div class="t" style="left:467px;top:352px;color:#fff;font-size:12px;letter-spacing:0.35px;">Диапазон дат</div>
<div class="t" style="left:601px;top:352px;color:#fff;font-size:12px;letter-spacing:0.05px;">DateBegin, DateEnd</div>
<div class="t" style="left:838px;top:352px;color:#fff;font-size:12px;letter-spacing:0.05px;">SELECT MIN(DateBegin) as begdate, MAX(DateE...</div>
<div class="t" style="left:1130px;top:352px;color:#fff;font-size:12px;letter-spacing:0.05px;">SELECT MIN(DateBegin) as begdate, MAX(DateEnd) ...</div>
<div style="left:363px;top:370px;width:1260px;height:21px;background:#fff;"></div>
<div style="left:363px;top:391px;width:1260px;height:1px;background:#8a8782;"></div>
<div style="left:463px;top:370px;width:1px;height:22px;background:#8a8782;"></div>
<div style="left:597px;top:370px;width:1px;height:22px;background:#8a8782;"></div>
<div style="left:834px;top:370px;width:1px;height:22px;background:#8a8782;"></div>
<div style="left:1126px;top:370px;width:1px;height:22px;background:#8a8782;"></div>
<div style="left:1439px;top:370px;width:1px;height:22px;background:#8a8782;"></div>
<div style="left:1539px;top:370px;width:1px;height:22px;background:#8a8782;"></div>
<div class="t" style="left:367px;top:374px;color:#000;font-size:12px;letter-spacing:0.35px;">Текстовый</div>
<div class="t" style="left:467px;top:374px;color:#000;font-size:12px;letter-spacing:0.35px;">Поиск</div>
<div class="t" style="left:601px;top:374px;color:#000;font-size:12px;letter-spacing:0.05px;">Equipments.ReportName, Equipments....</div>
<div class="t" style="left:1615px;top:374px;color:#000;font-size:12px;letter-spacing:0.05px;">20</div>
<div style="left:363px;top:392px;width:1260px;height:21px;background:#fff;"></div>
<div style="left:363px;top:413px;width:1260px;height:1px;background:#8a8782;"></div>
<div style="left:463px;top:392px;width:1px;height:22px;background:#8a8782;"></div>
<div style="left:597px;top:392px;width:1px;height:22px;background:#8a8782;"></div>
<div style="left:834px;top:392px;width:1px;height:22px;background:#8a8782;"></div>
<div style="left:1126px;top:392px;width:1px;height:22px;background:#8a8782;"></div>
<div style="left:1439px;top:392px;width:1px;height:22px;background:#8a8782;"></div>
<div style="left:1539px;top:392px;width:1px;height:22px;background:#8a8782;"></div>
<div class="t" style="left:367px;top:396px;color:#000;font-size:12px;letter-spacing:0.35px;">Список</div>
<div class="t" style="left:467px;top:396px;color:#000;font-size:12px;letter-spacing:0.35px;">Филиал</div>
<div class="t" style="left:601px;top:396px;color:#000;font-size:12px;letter-spacing:0.05px;">Rooms.BranchID</div>
<div class="t" style="left:838px;top:396px;color:#000;font-size:12px;letter-spacing:0.05px;">SELECT ID, Name FROM Branches ORDER BY Br...</div>
<div class="t" style="left:1130px;top:396px;color:#000;font-size:12px;letter-spacing:0.05px;">SELECT ID, Name FROM Branches ORDER BY Branc...</div>
<div class="t" style="left:1443px;top:396px;color:#000;font-size:12px;letter-spacing:0.05px;">0</div>
<div style="left:363px;top:414px;width:1260px;height:21px;background:#fff;"></div>
<div style="left:363px;top:435px;width:1260px;height:1px;background:#8a8782;"></div>
<div style="left:463px;top:414px;width:1px;height:22px;background:#8a8782;"></div>
<div style="left:597px;top:414px;width:1px;height:22px;background:#8a8782;"></div>
<div style="left:834px;top:414px;width:1px;height:22px;background:#8a8782;"></div>
<div style="left:1126px;top:414px;width:1px;height:22px;background:#8a8782;"></div>
<div style="left:1439px;top:414px;width:1px;height:22px;background:#8a8782;"></div>
<div style="left:1539px;top:414px;width:1px;height:22px;background:#8a8782;"></div>
<div class="t" style="left:367px;top:418px;color:#000;font-size:12px;letter-spacing:0.35px;">Список</div>
<div class="t" style="left:467px;top:418px;color:#000;font-size:12px;letter-spacing:0.35px;">Мастерская</div>
<div class="t" style="left:601px;top:418px;color:#000;font-size:12px;letter-spacing:0.05px;">Firms.ID</div>
<div class="t" style="left:838px;top:418px;color:#000;font-size:12px;letter-spacing:0.05px;">SELECT Firms.ID, Firms.Name FROM Firms RIGH...</div>
<div class="t" style="left:1130px;top:418px;color:#000;font-size:12px;letter-spacing:0.05px;">SELECT Firms.ID, Firms.Name FROM Firms RIGHT J...</div>
<div class="t" style="left:1443px;top:418px;color:#000;font-size:12px;letter-spacing:0.05px;">0</div>
<div style="left:363px;top:436px;width:1260px;height:21px;background:#fff;"></div>
<div style="left:363px;top:457px;width:1260px;height:1px;background:#8a8782;"></div>
<div style="left:463px;top:436px;width:1px;height:22px;background:#8a8782;"></div>
<div style="left:597px;top:436px;width:1px;height:22px;background:#8a8782;"></div>
<div style="left:834px;top:436px;width:1px;height:22px;background:#8a8782;"></div>
<div style="left:1126px;top:436px;width:1px;height:22px;background:#8a8782;"></div>
<div style="left:1439px;top:436px;width:1px;height:22px;background:#8a8782;"></div>
<div style="left:1539px;top:436px;width:1px;height:22px;background:#8a8782;"></div>
<div class="t" style="left:367px;top:440px;color:#000;font-size:12px;letter-spacing:0.35px;">Логический</div>
<div class="t" style="left:467px;top:440px;color:#000;font-size:12px;letter-spacing:0.35px;">Гарантийный ремонт</div>
<div class="t" style="left:601px;top:440px;color:#000;font-size:12px;letter-spacing:0.05px;">ByGuarantee</div>
</div></div>
<div id="wm">serveradmin.ru</div>
<div class="ov" style="left:10px;top:10px;width:1614px;height:1px;background:rgba(0,0,0,0.35)"></div>
<div class="ov" style="left:10px;top:11px;width:1px;height:682px;background:rgba(0,0,0,0.35)"></div>
<div class="ov" style="left:11px;top:11px;width:1612px;height:1px;background:#fff"></div>
<div class="ov" style="left:11px;top:12px;width:1px;height:680px;background:#fff"></div>
<div class="ov" style="left:1624px;top:12px;width:1px;height:681px;background:rgba(255,255,255,0.58)"></div>
<div class="ov" style="left:13px;top:693px;width:1611px;height:1px;background:linear-gradient(to right,rgba(0,0,0,0.2),rgba(0,0,0,0.75) 5px)"></div>
</body></html>
